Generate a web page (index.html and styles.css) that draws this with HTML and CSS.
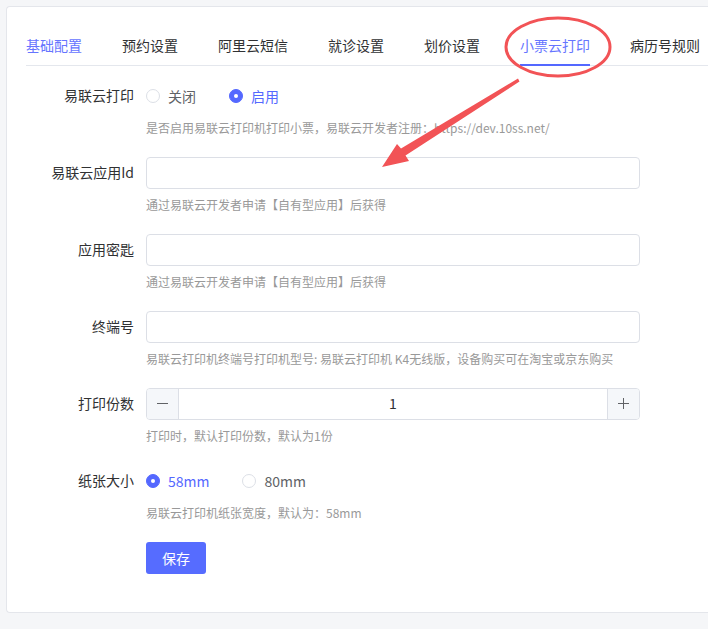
FILE: index.html
```html
<!DOCTYPE html>
<html>
	<head>
		<meta charset="UTF-8">
		<title>小票云打印</title>
		<link rel="stylesheet" href="styles.css">
	</head>
	<body>
		<div class="card">
			<ul class="tabs">
				<li class="hover">基础配置</li>
				<li>预约设置</li>
				<li>阿里云短信</li>
				<li>就诊设置</li>
				<li>划价设置</li>
				<li class="active">小票云打印</li>
				<li>病历号规则</li>
			</ul>
			<div class="form">
				<div class="item">
					<label class="label">易联云打印</label>
					<div class="content">
						<div class="control radios">
							<span class="radio"><i></i>关闭</span>
							<span class="radio checked"><i></i>启用</span>
						</div>
						<p class="help">是否启用易联云打印机打印小票，易联云开发者注册：https://dev.10ss.net/</p>
					</div>
				</div>
				<div class="item">
					<label class="label">易联云应用Id</label>
					<div class="content">
						<input class="input" type="text">
						<p class="help">通过易联云开发者申请【自有型应用】后获得</p>
					</div>
				</div>
				<div class="item">
					<label class="label">应用密匙</label>
					<div class="content">
						<input class="input" type="text">
						<p class="help">通过易联云开发者申请【自有型应用】后获得</p>
					</div>
				</div>
				<div class="item">
					<label class="label">终端号</label>
					<div class="content">
						<input class="input" type="text">
						<p class="help">易联云打印机终端号打印机型号: 易联云打印机 K4无线版，设备购买可在淘宝或京东购买</p>
					</div>
				</div>
				<div class="item">
					<label class="label">打印份数</label>
					<div class="content">
						<div class="number">
							<span class="btn minus"></span>
							<span class="value">1</span>
							<span class="btn plus"></span>
						</div>
						<p class="help">打印时，默认打印份数，默认为1份</p>
					</div>
				</div>
				<div class="item">
					<label class="label">纸张大小</label>
					<div class="content">
						<div class="control radios">
							<span class="radio checked"><i></i>58mm</span>
							<span class="radio"><i></i>80mm</span>
						</div>
						<p class="help">易联云打印机纸张宽度，默认为：58mm</p>
					</div>
				</div>
				<div class="item">
					<span class="label"></span>
					<div class="content">
						<button class="save">保存</button>
					</div>
				</div>
			</div>
			<svg class="mark" width="708" height="200" viewBox="0 0 708 200">
				<ellipse cx="558" cy="47" rx="52" ry="29" fill="none" stroke="#f25356" stroke-width="3"/>
				<path d="M518 78.5 L401 148.5 L397 144 L382 167 L409 161 L405.5 155.5 L519.5 81.5 Z" fill="#f25356"/>
			</svg>
		</div>
	</body>
</html>
```

FILE: styles.css
```css
*{
	margin:0;
	padding:0;
	box-sizing:border-box;
}
html,body{
	overflow:hidden;
}
body{
	background:#f5f6f8;
	font-family:"Noto Sans CJK SC","Noto Sans",sans-serif;
	font-size:14px;
	color:#303133;
	padding:6px 0 0 6px;
	height:629px;
}
.card{
	position:relative;
	width:702px;
	height:607px;
	background:#fff;
	border:1px solid #e4e6eb;
	border-right:none;
	border-radius:4px 0 0 4px;
	padding:19px 0 0 19px;
	overflow:hidden;
}
.tabs{
	display:flex;
	list-style:none;
	border-bottom:1px solid #e4e7ed;
	gap:40px;
	height:40px;
}
.tabs li{
	line-height:38px;
	height:40px;
	white-space:nowrap;
}
.tabs .hover{
	color:#6675ff;
}
.tabs .active{
	color:#6675ff;
	border-bottom:2px solid #5468ff;
}
.form{
	padding-top:14px;
}
.item{
	display:flex;
	margin-bottom:19px;
}
.label{
	width:120px;
	padding-right:12px;
	text-align:right;
	line-height:30px;
	height:32px;
	flex-shrink:0;
	color:#303133;
}
.content{
	width:494px;
}
.control{
	height:32px;
	display:flex;
	align-items:center;
	padding-bottom:1px;
}
.radio{
	display:flex;
	align-items:center;
	margin-right:33px;
	color:#606266;
}
.radio i{
	width:14px;
	height:14px;
	border:1px solid #dcdfe6;
	border-radius:50%;
	margin-right:8px;
	background:#fff;
	position:relative;
}
.radio.checked{
	color:#5468ff;
}
.radio.checked i{
	background:#5468ff;
	border-color:#5468ff;
}
.radio.checked i::after{
	content:"";
	position:absolute;
	left:4px;
	top:4px;
	width:4px;
	height:4px;
	border-radius:50%;
	background:#fff;
}
.help{
	font-size:12px;
	color:#999;
	line-height:20px;
	margin-top:6px;
	white-space:nowrap;
}
.input{
	display:block;
	width:494px;
	height:32px;
	border:1px solid #dcdfe6;
	border-radius:4px;
	outline:none;
}
.number{
	display:flex;
	width:494px;
	height:32px;
	border:1px solid #dcdfe6;
	border-radius:4px;
	overflow:hidden;
}
.number .btn{
	width:32px;
	background:#f5f7fa;
	position:relative;
}
.number .minus{
	border-right:1px solid #dcdfe6;
}
.number .plus{
	border-left:1px solid #dcdfe6;
}
.number .btn::before{
	content:"";
	position:absolute;
	left:10px;
	top:14px;
	width:11px;
	height:1px;
	background:#606266;
}
.number .plus::after{
	content:"";
	position:absolute;
	left:15px;
	top:9px;
	width:1px;
	height:11px;
	background:#606266;
}
.number .value{
	flex:1;
	text-align:center;
	line-height:28px;
	color:#303133;
}
.save{
	width:60px;
	height:32px;
	border:none;
	border-radius:3px;
	background:#566cff;
	color:#fff;
	font-family:inherit;
	font-size:14px;
}
.mark{
	position:absolute;
	left:-7px;
	top:-7px;
	pointer-events:none;
}
```
